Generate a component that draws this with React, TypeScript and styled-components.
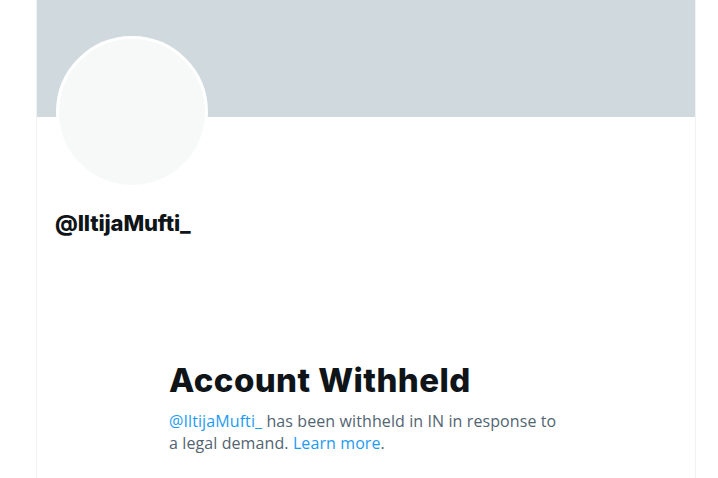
import React from "react";
import styled, { createGlobalStyle } from "styled-components";

const Global = createGlobalStyle`
  html, body { margin: 0; padding: 0; background: #ffffff; }
  body { font-family: "Open Sans", "Noto Sans", sans-serif; }
`;

const Column = styled.main`
  margin-left: 36px;
  width: 658px;
  min-height: 478px;
  border-left: 1px solid #eff3f4;
  border-right: 1px solid #eff3f4;
  display: flex;
  flex-direction: column;
`;

const Banner = styled.div`
  height: 117px;
  background: #cfd9de;
`;

const Profile = styled.section`
  padding: 0 16px 0 18px;
  display: flex;
  flex-direction: column;
`;

const Avatar = styled.div`
  width: 146px;
  height: 146px;
  margin-top: -81px;
  margin-left: 1px;
  border-radius: 50%;
  border: 3px solid #ffffff;
  background: #f7f9f9;
`;

const Handle = styled.div`
  margin-top: 22px;
  font-family: Inter, "Liberation Sans", sans-serif;
  font-weight: 800;
  font-size: 22px;
  line-height: 26px;
  color: #0f1419;
  letter-spacing: -0.15px;
`;

const Empty = styled.section`
  margin: 125px 0 0 132px;
  width: 396px;
  display: flex;
  flex-direction: column;
`;

const Title = styled.h1`
  margin: 0 0 11px;
  font-family: Inter, "Liberation Sans", sans-serif;
  font-weight: 800;
  font-size: 33px;
  line-height: 38px;
  color: #0f1419;
  letter-spacing: 0.42px;
`;

const Body = styled.p`
  margin: 0;
  font-family: "Open Sans", "Noto Sans", sans-serif;
  font-size: 16px;
  line-height: 22px;
  letter-spacing: 0.1px;
  color: #536471;
`;

const Link = styled.a`
  color: #1d9bf0;
  text-decoration: none;
`;

export default function App() {
  return (
    <>
      <Global />
      <Column>
        <Banner />
        <Profile>
          <Avatar />
          <Handle>@IltijaMufti_</Handle>
        </Profile>
        <Empty>
          <Title>Account Withheld</Title>
          <Body>
            <Link href="#">@IltijaMufti_</Link> has been withheld in IN in response to a legal demand.{" "}
            <Link href="#">Learn more</Link>.
          </Body>
        </Empty>
      </Column>
    </>
  );
}
